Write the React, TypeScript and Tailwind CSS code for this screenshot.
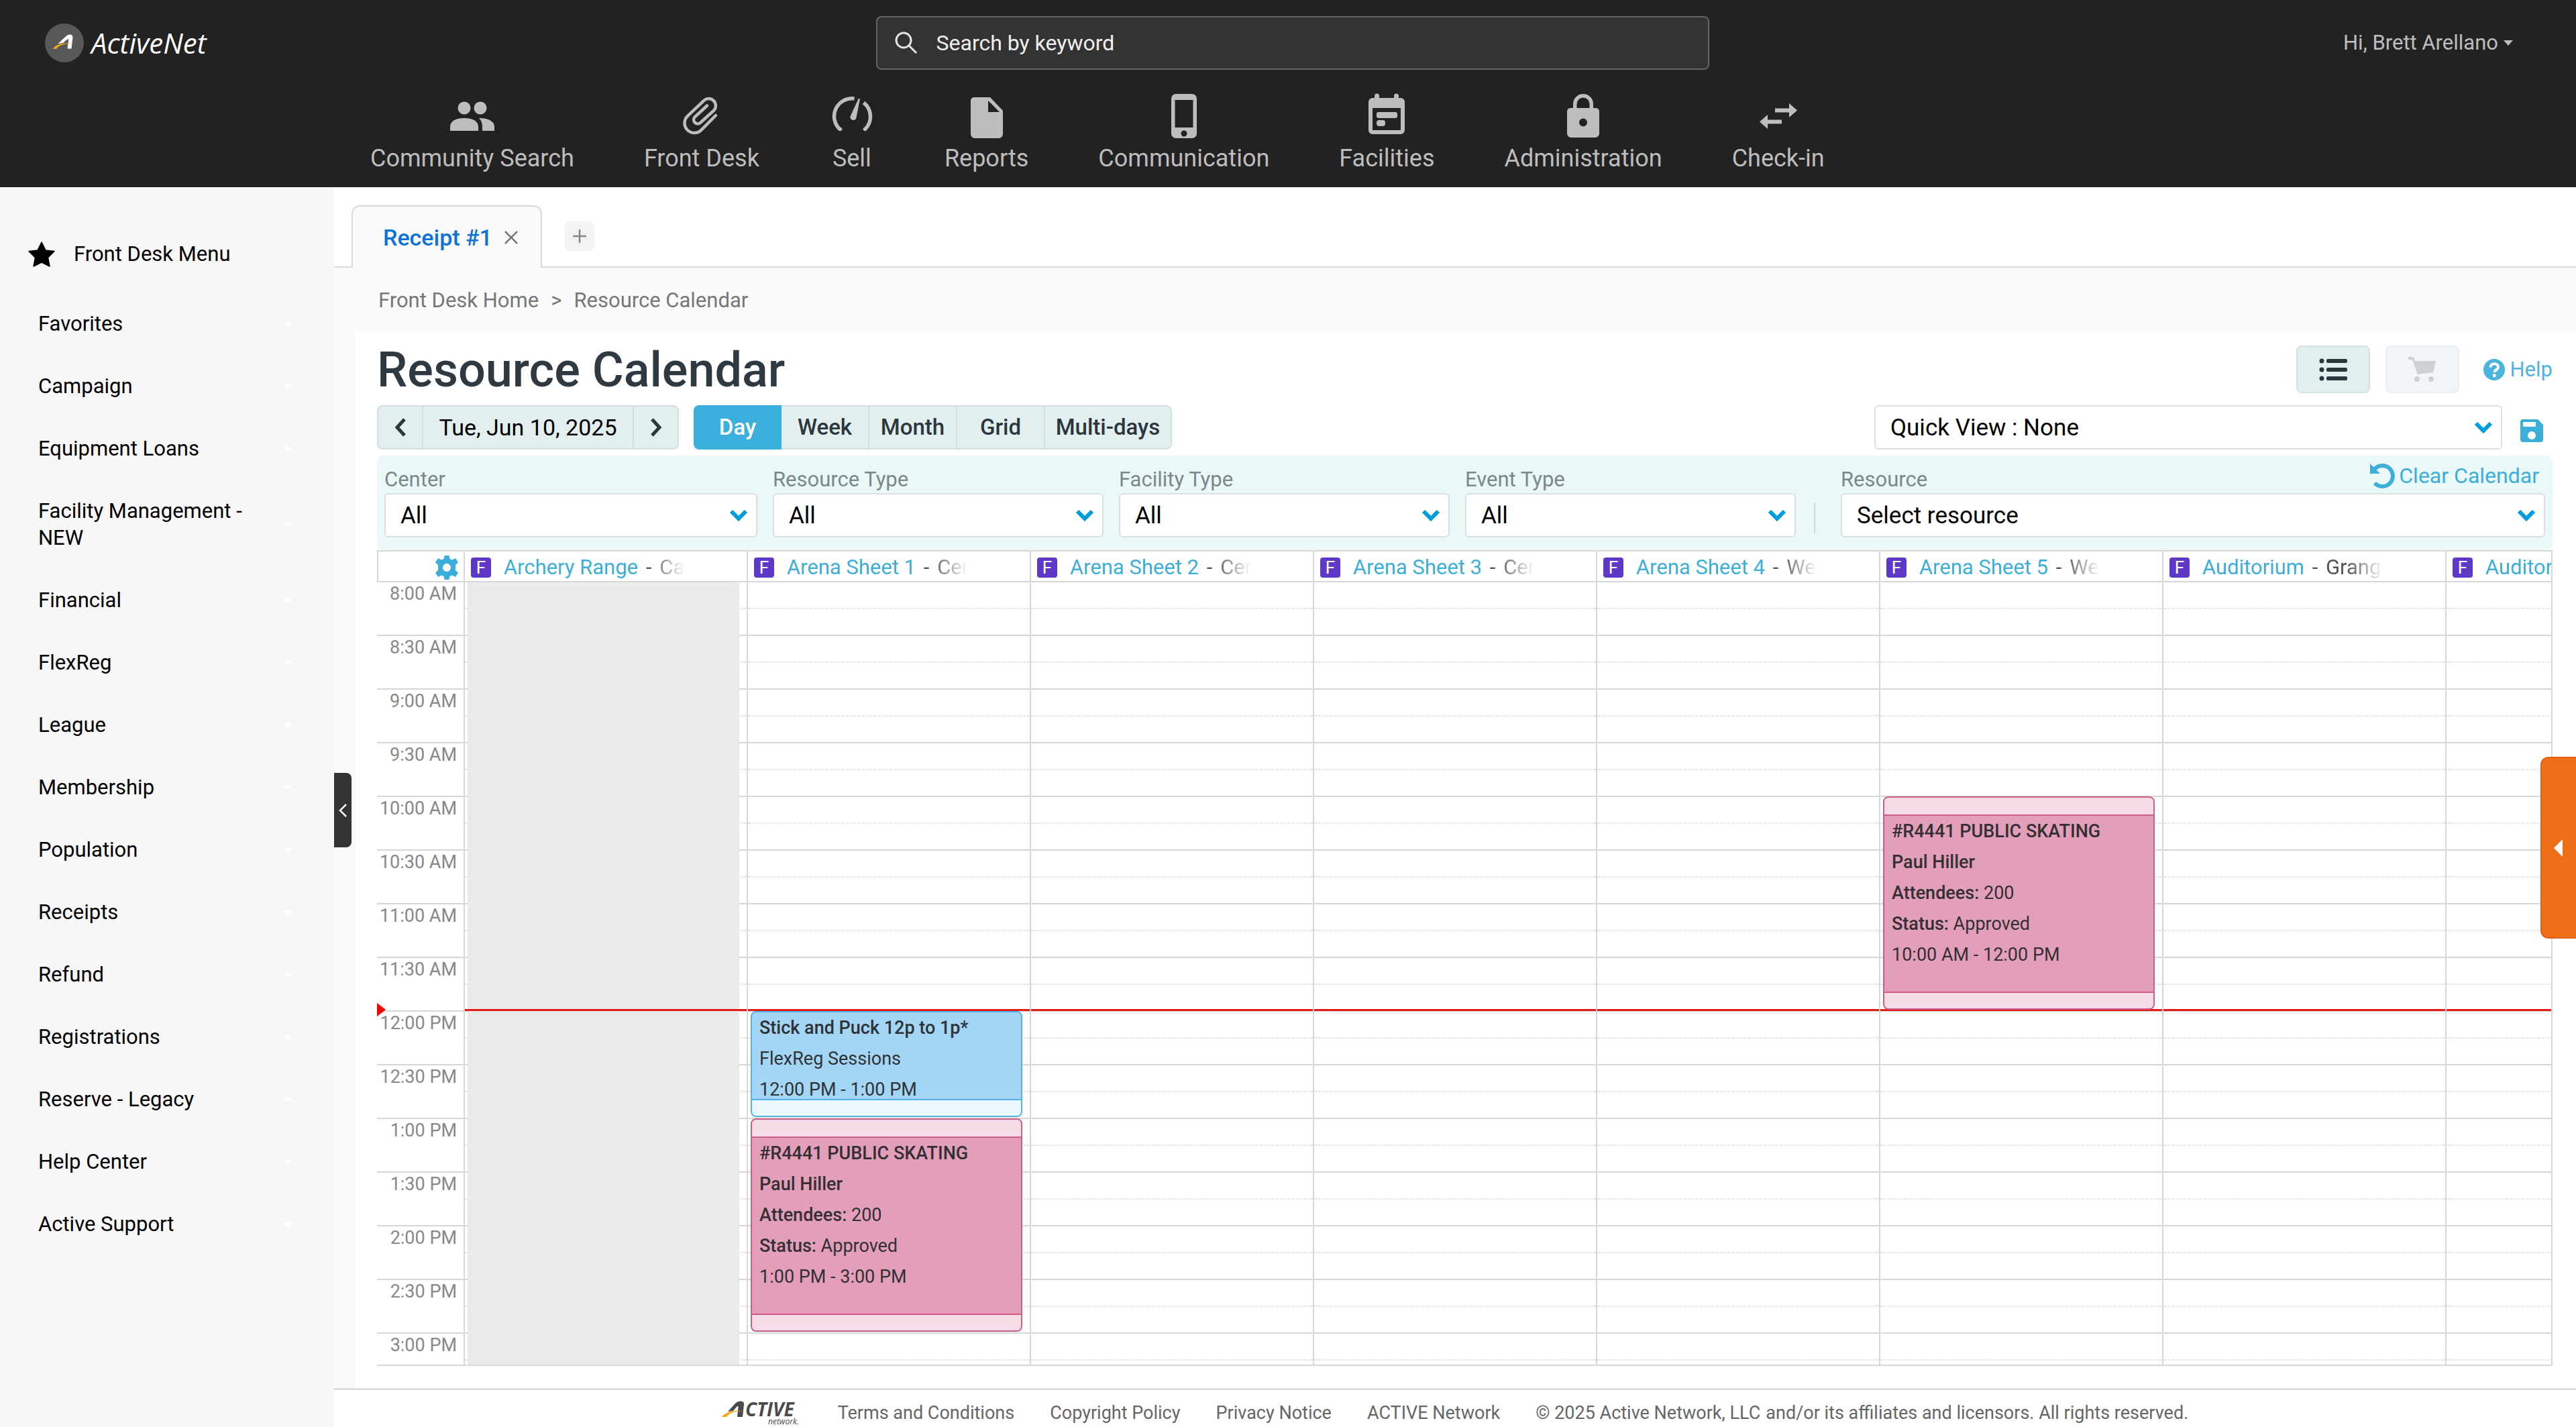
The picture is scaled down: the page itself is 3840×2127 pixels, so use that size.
import React from "react";

const NAV = [
  { label: "Community Search", icon: "people" },
  { label: "Front Desk", icon: "clip" },
  { label: "Sell", icon: "gauge" },
  { label: "Reports", icon: "file" },
  { label: "Communication", icon: "phone" },
  { label: "Facilities", icon: "calendar" },
  { label: "Administration", icon: "lock" },
  { label: "Check-in", icon: "arrows" },
];

const MENU = [
  "Favorites",
  "Campaign",
  "Equipment Loans",
  "Facility Management - NEW",
  "Financial",
  "FlexReg",
  "League",
  "Membership",
  "Population",
  "Receipts",
  "Refund",
  "Registrations",
  "Reserve - Legacy",
  "Help Center",
  "Active Support",
];

const TIMES = [
  "8:00 AM", "8:30 AM", "9:00 AM", "9:30 AM", "10:00 AM", "10:30 AM", "11:00 AM", "11:30 AM",
  "12:00 PM", "12:30 PM", "1:00 PM", "1:30 PM", "2:00 PM", "2:30 PM", "3:00 PM",
];

type Booking = { kind: "pink" | "blue"; start: number; slots: number; time: string };
type Resource = { name: string; center: string; blocked?: boolean; bookings?: Booking[] };

const RESOURCES: Resource[] = [
  { name: "Archery Range", center: "Carson", blocked: true },
  {
    name: "Arena Sheet 1",
    center: "Central",
    bookings: [
      { kind: "blue", start: 8, slots: 2, time: "12:00 PM - 1:00 PM" },
      { kind: "pink", start: 10, slots: 4, time: "1:00 PM - 3:00 PM" },
    ],
  },
  { name: "Arena Sheet 2", center: "Central" },
  { name: "Arena Sheet 3", center: "Central" },
  { name: "Arena Sheet 4", center: "West" },
  {
    name: "Arena Sheet 5",
    center: "West",
    bookings: [{ kind: "pink", start: 4, slots: 4, time: "10:00 AM - 12:00 PM" }],
  },
  { name: "Auditorium", center: "Grange" },
  { name: "Auditorium 2", center: "Grange" },
];

function NavIcon({ name }: { name: string }) {
  return (
    <svg viewBox="0 0 68 68" className="h-[68px] w-[68px]" fill="#bdbdbd" aria-hidden="true">
      {name === "people" && (
        <>
          <circle cx="22" cy="23" r="9.5" />
          <circle cx="46" cy="23" r="9.5" />
          <path d="M1 57V51C1 42 10 38 22 38s21 4 21 13v6z" />
          <path d="M44 38c13 0 23 4 23 13v6H49v-6c0-6-2-10-5-13z" />
        </>
      )}
      {name === "clip" && (
        <path
          d="M55 34 33.300 55.800A14.500 14.500 0 0 1 12.800 35.200L37.600 11.600A10.500 10.500 0 0 1 52.400 26.400L31.700 45.200A6 6 0 0 1 23.300 36.800L42 19.500"
          fill="none"
          stroke="#bdbdbd"
          strokeWidth="4.500"
          strokeLinecap="round"
        />
      )}
      {name === "gauge" && (
        <>
          <path d="M37.500 9A26.500 26.500 0 0 0 16.300 55" fill="none" stroke="#bdbdbd" strokeWidth="5.500" />
          <path d="M51.500 15A26.500 26.500 0 0 1 53.700 54.500" fill="none" stroke="#bdbdbd" strokeWidth="5.500" />
          <circle cx="16.500" cy="54.500" r="2.800" />
          <circle cx="53.500" cy="54.500" r="2.800" />
          <path d="M43.500 9.500a1.200 1.200 0 0 1 2.300.5L40.500 37.500a4.600 4.600 0 0 1-9-2z" />
        </>
      )}
      {name === "file" && (
        <path
          fillRule="evenodd"
          d="M15 7h24l19 20v35a6 6 0 0 1-6 6H16a6 6 0 0 1-6-6V12a5 5 0 0 1 5-5zm21 5v17h17z"
        />
      )}
      {name === "phone" && (
        <path
          fillRule="evenodd"
          d="M22 2h24a7 7 0 0 1 7 7v52a7 7 0 0 1-7 7H22a7 7 0 0 1-7-7V9a7 7 0 0 1 7-7zm-1.500 9v41h27V11zM34 56.500a4.500 4.500 0 1 0 0 9 4.500 4.500 0 0 0 0-9z"
        />
      )}
      {name === "calendar" && (
        <>
          <path
            fillRule="evenodd"
            d="M16 5a3.500 3.500 0 0 1 7 0v3h22V5a3.500 3.500 0 0 1 7 0v3h3a6 6 0 0 1 6 6v42a6 6 0 0 1-6 6H13a6 6 0 0 1-6-6V14a6 6 0 0 1 6-6h3zM13 23v33h42V23z"
          />
          <rect x="19" y="29" width="31" height="9" rx="3" />
          <rect x="19" y="41" width="13" height="9" rx="4" />
        </>
      )}
      {name === "lock" && (
        <path
          fillRule="evenodd"
          d="M19 23V17a15 15 0 0 1 30 0v6h4a5 5 0 0 1 5 5v33a6 6 0 0 1-6 6H16a6 6 0 0 1-6-6V28a5 5 0 0 1 5-5zm5.500 0h19V17a9.500 9.500 0 0 0-19 0zM34 38.500a6 6 0 1 0 0 12 6 6 0 0 0 0-12z"
        />
      )}
      {name === "arrows" && (
        <path d="M50 16l12 10.500L50 37v-7.500H29v-6h21zM18 33v7.500h21v6H18V54L6 43.500z" />
      )}
    </svg>
  );
}

function Chevron() {
  return (
    <svg viewBox="0 0 28 18" className="pointer-events-none absolute top-1/2 right-[14px] h-[18px] w-7 -translate-y-1/2" aria-hidden="true">
      <path d="M3 3l11 11L25 3" fill="none" stroke="#009fdb" strokeWidth="6" />
    </svg>
  );
}

function SelectBox({ id, value }: { id: string; value: string }) {
  return (
    <div className="relative">
      <select
        id={id}
        className="block h-[66px] w-full appearance-none rounded-[6px] border-2 border-[#dcdfe0] bg-white pt-[2px] pr-12 pl-[22px] text-[35px] text-black"
      >
        <option>{value}</option>
      </select>
      <Chevron />
    </div>
  );
}

function Filter({ id, label, value, className }: { id: string; label: string; value: string; className: string }) {
  return (
    <div className={className}>
      <label htmlFor={id} className="block pt-[2px] text-[31px] leading-[40px] text-[#7b8889]">
        {label}
      </label>
      <SelectBox id={id} value={value} />
    </div>
  );
}

function BookingCard({ booking }: { booking: Booking }) {
  const place = { top: booking.start * 80 - 1, height: booking.slots * 80 - 2 };
  if (booking.kind === "blue") {
    return (
      <div
        style={place}
        className="absolute right-[11px] left-1 flex flex-col overflow-hidden rounded-[8px] border-2 border-[#51b1ea] bg-[#a3d6f5] text-[27px] leading-[46px] text-[#2f3337]"
      >
        <div className="min-h-0 flex-1 pl-[11px]">
          <p className="font-medium">Stick and Puck 12p to 1p*</p>
          <p>FlexReg Sessions</p>
          <p>{booking.time}</p>
        </div>
        <div className="h-[25px] shrink-0 border-t-2 border-[#51b1ea] bg-[#eaf7fd]" />
      </div>
    );
  }
  return (
    <div
      style={place}
      className="absolute right-[11px] left-1 flex flex-col overflow-hidden rounded-[8px] border-2 border-[#cc5c88] bg-[#e39fba] text-[27px] leading-[46px] text-[#332f33]"
    >
      <div className="h-[27px] shrink-0 border-b-2 border-[#cc5c88] bg-[#f5dce7]" />
      <div className="min-h-0 flex-1 pl-[11px]">
        <p className="font-medium">#R4441 PUBLIC SKATING</p>
        <p className="font-medium">Paul Hiller</p>
        <p>
          <span className="font-medium">Attendees:</span> 200
        </p>
        <p>
          <span className="font-medium">Status:</span> Approved
        </p>
        <p>{booking.time}</p>
      </div>
      <div className="h-[25px] shrink-0 border-t-2 border-[#cc5c88] bg-[#f5dce7]" />
    </div>
  );
}

function ActiveMark() {
  return (
    <svg viewBox="0 0 58 58" className="h-[58px] w-[58px]" aria-hidden="true">
      <circle cx="29" cy="29" r="29" fill="#57585a" />
      <path d="M19.500 30L32 18.500c3-2.700 9.700-3.500 9.400 2.500L39.500 37.500h-6l1.600-13c.2-1.600-.8-1.600-1.800-.7L27 29z" fill="#fff" />
      <path d="M11.500 37.800c6-7.500 15-9.300 28.500-8-12.500.6-19 2.500-22.500 8z" fill="#f5a81c" />
    </svg>
  );
}

function FooterLogo() {
  return (
    <svg viewBox="0 0 120 36" className="h-9 w-[120px]" role="img" aria-label="ACTIVE network">
      <path d="M9 16L21 3c3.500-3.500 12.500-4 12 2L31 24h-8l1.500-15c.1-1.500-.9-1.500-2-.5L17 15z" fill="#4a4a4b" />
      <path d="M0 24c6-7.500 15-10 32-9-14 .8-21 3-25 9z" fill="#f5a81c" />
      <text x="35" y="23" fontFamily="Open Sans" fontStyle="italic" fontWeight="700" fontSize="28" fill="#4a4a4b">CTIVE</text>
      <text x="69" y="35" fontFamily="Open Sans" fontStyle="italic" fontSize="12" fill="#4a4a4b">network.</text>
    </svg>
  );
}

function Header() {
  return (
    <header className="h-[279px] shrink-0 bg-[#222222]">
      <div className="flex items-center justify-between pt-6 pr-[94px] pl-[67px]">
        <a href="#home" className="flex w-[520px] items-center gap-[11px]">
          <ActiveMark />
          <span className="font-[Open_Sans] text-[42px] leading-[58px] font-medium text-white italic">ActiveNet</span>
        </a>
        <label className="flex h-20 w-[1242px] items-center rounded-[8px] border-2 border-[#666666] bg-[#333333] pl-[26px]">
          <svg viewBox="0 0 34 34" className="h-[34px] w-[34px]" fill="none" stroke="#e4e4e4" strokeWidth="3" aria-hidden="true">
            <circle cx="13" cy="13" r="11" />
            <path d="M21 21l11 11" />
          </svg>
          <input
            type="search"
            aria-label="Search by keyword"
            placeholder="Search by keyword"
            className="ml-7 h-full flex-1 bg-transparent text-[32px] text-white outline-none placeholder:text-[#efefef] placeholder:opacity-100"
          />
        </label>
        <button type="button" className="flex w-[480px] items-center justify-end gap-2 text-[31px] text-[#bdbdbd]">
          Hi, Brett Arellano
          <svg viewBox="0 0 14 8" className="h-2 w-[14px]" aria-hidden="true">
            <path d="M0 0h14L7 8z" fill="#bdbdbd" />
          </svg>
        </button>
      </div>
      <nav className="flex gap-[104px] pt-[34px] pl-[552px]" aria-label="Main">
        {NAV.map((n) => (
          <a key={n.label} href="#nav" className="flex flex-col items-center text-[36px] leading-[44px] whitespace-nowrap text-[#bdbdbd]">
            <NavIcon name={n.icon} />
            <span className="mt-2 block">{n.label}</span>
          </a>
        ))}
      </nav>
    </header>
  );
}

function Sidebar() {
  return (
    <aside className="w-[498px] shrink-0 bg-[#f7f7f7] pt-[80px] text-[31px] leading-[40px] text-black">
      <div className="flex items-center gap-[28px] pl-[42px]">
        <svg viewBox="0 0 40 38" className="h-[38px] w-10" aria-hidden="true">
          <path d="M20 1l6 12 13 1.500-9.500 9.500L32 37l-12-6-12 6 2.500-13L1 14.500 14 13z" fill="#000" stroke="#000" strokeWidth="1.500" strokeLinejoin="round" />
        </svg>
        <h2>Front Desk Menu</h2>
      </div>
      <ul className="mt-[38px]">
        {MENU.map((m) => (
          <li key={m}>
            <button type="button" className="mb-px flex w-full items-center py-[26px] pr-[62px] pl-[57px] text-left">
              <span className="w-[330px]">{m}</span>
              <svg viewBox="0 0 14 7" className="ml-auto h-[7px] w-[14px]" aria-hidden="true">
                <path d="M0 0h14L7 7z" fill="#fff" />
              </svg>
            </button>
          </li>
        ))}
      </ul>
    </aside>
  );
}

function TabStrip() {
  return (
    <div className="flex h-[120px] shrink-0 bg-white">
      <div className="w-[26px] border-b-2 border-[#dadada]" />
      <div className="mt-[27px] flex items-center rounded-t-[12px] border-2 border-b-0 border-[#dadada] bg-[#fafafa] pr-[34px] pl-[45px]">
        <button type="button" className="text-[34px] leading-[44px] font-medium text-[#0b72d9]">
          Receipt #1
        </button>
        <button type="button" aria-label="Close tab" className="ml-[18px]">
          <svg viewBox="0 0 20 20" className="h-5 w-5" stroke="#777" strokeWidth="2.500" aria-hidden="true">
            <path d="M1 1l18 18M19 1L1 19" />
          </svg>
        </button>
      </div>
      <div className="flex-1 border-b-2 border-[#dadada] pt-[51px] pl-[34px]">
        <button type="button" aria-label="New tab" className="flex h-11 w-11 items-center justify-center rounded-[8px] bg-[#f2f3f3]">
          <svg viewBox="0 0 20 20" className="h-5 w-5" stroke="#888" strokeWidth="2.500" aria-hidden="true">
            <path d="M10 0v20M0 10h20" />
          </svg>
        </button>
      </div>
    </div>
  );
}

function Toolbar() {
  return (
    <>
      <div className="flex items-center justify-between">
        <h1 className="pt-[3px] text-[72px] leading-[68px] font-medium text-[#2f3941]">Resource Calendar</h1>
        <div className="flex items-center">
          <button type="button" aria-label="List view" className="flex h-[71px] w-[110px] items-center justify-center rounded-[8px] border-2 border-[#d5e2e3] bg-[#e2efee]">
            <svg viewBox="0 0 42 34" className="h-[34px] w-[42px]" fill="#2b363d" aria-hidden="true">
              <circle cx="4" cy="4" r="3.500" />
              <circle cx="4" cy="17" r="3.500" />
              <circle cx="4" cy="30" r="3.500" />
              <rect x="11" y="1" width="31" height="6" rx="2" />
              <rect x="11" y="14" width="31" height="6" rx="2" />
              <rect x="11" y="27" width="31" height="6" rx="2" />
            </svg>
          </button>
          <button type="button" disabled aria-label="Cart" className="ml-[23px] flex h-[71px] w-[110px] items-center justify-center rounded-[8px] border-2 border-[#e8eef1] bg-[#f0f5f7]">
            <svg viewBox="0 0 42 38" className="h-[38px] w-[42px]" fill="#cdd1d4" aria-hidden="true">
              <path d="M0 0h6c2 0 2.500 1 3 3l1 3h31l-4 17-23 3L6 4H0z" />
              <circle cx="13" cy="33" r="4" />
              <circle cx="34" cy="33" r="4" />
            </svg>
          </button>
          <a href="#help" className="ml-[36px] flex items-center gap-2 text-[31px] leading-[40px] text-[#4fb3dd]">
            <svg viewBox="0 0 32 32" className="h-8 w-8" aria-hidden="true">
              <circle cx="16" cy="16" r="16" fill="#4ab3de" />
              <path d="M10.500 12.500c0-7 11.500-7 11.500-.5 0 4.500-5.500 4-5.500 8" fill="none" stroke="#fff" strokeWidth="4" />
              <rect x="14" y="22.500" width="4.500" height="4.500" fill="#fff" />
            </svg>
            Help
          </a>
        </div>
      </div>
      <div className="mt-[18px] flex items-center">
        <div className="flex h-[66px] rounded-[8px] border-2 border-[#d3dfe2] bg-[#e2efee]">
          <button type="button" aria-label="Previous day" className="flex w-[67px] items-center justify-center border-r-2 border-[#d3dfe2]">
            <svg viewBox="0 0 18 28" className="h-7 w-[18px]" fill="none" stroke="#2b363d" strokeWidth="5" aria-hidden="true">
              <path d="M15 2L4 14l11 12" />
            </svg>
          </button>
          <button type="button" className="w-[312px] text-[34px] whitespace-nowrap text-black">
            Tue, Jun 10, 2025
          </button>
          <button type="button" aria-label="Next day" className="flex w-[67px] items-center justify-center border-l-2 border-[#d3dfe2]">
            <svg viewBox="0 0 18 28" className="h-7 w-[18px]" fill="none" stroke="#2b363d" strokeWidth="5" aria-hidden="true">
              <path d="M3 2l11 12L3 26" />
            </svg>
          </button>
        </div>
        <div className="ml-[22px] flex h-[66px] overflow-hidden rounded-[8px] text-[33px] font-medium text-[#2b363d]">
          <button type="button" className="w-[131px] bg-[#3bb0dd] text-white">Day</button>
          <button type="button" className="w-[131px] border-y-2 border-r-2 border-[#d3dfe2] bg-[#e2efee]">Week</button>
          <button type="button" className="w-[131px] border-y-2 border-r-2 border-[#d3dfe2] bg-[#e2efee]">Month</button>
          <button type="button" className="w-[131px] border-y-2 border-r-2 border-[#d3dfe2] bg-[#e2efee]">Grid</button>
          <button type="button" className="w-[189px] rounded-r-[8px] border-y-2 border-r-2 border-[#d3dfe2] bg-[#e2efee]">Multi-days</button>
        </div>
        <div className="ml-auto w-[936px]">
          <label htmlFor="quick" className="hidden">Quick View</label>
          <SelectBox id="quick" value="Quick View : None" />
        </div>
        <button type="button" aria-label="Save view" className="mt-[10px] mr-[14px] ml-[27px]">
          <svg viewBox="0 0 34 34" className="h-[34px] w-[34px]" aria-hidden="true">
            <path fillRule="evenodd" fill="#3bafda" d="M4 0h22l8 8v22a4 4 0 0 1-4 4H4a4 4 0 0 1-4-4V4a4 4 0 0 1 4-4zm0 4v7h19V4zm13 14a6 6 0 1 0 0 12 6 6 0 0 0 0-12z" />
          </svg>
        </button>
      </div>
    </>
  );
}

function Filters() {
  return (
    <div className="relative mt-[9px] flex gap-[23px] rounded-[10px] bg-[#ebf8f8] px-[11px] pt-[14px] pb-[19px]">
      <Filter id="center" label="Center" value="All" className="min-w-0 flex-[556]" />
      <Filter id="rtype" label="Resource Type" value="All" className="min-w-0 flex-[493]" />
      <Filter id="ftype" label="Facility Type" value="All" className="min-w-0 flex-[493]" />
      <Filter id="etype" label="Event Type" value="All" className="min-w-0 flex-[493]" />
      <div className="mr-[15px] mb-[6px] ml-1 h-[45px] w-[2px] self-end bg-[#cfdada]" />
      <Filter id="resource" label="Resource" value="Select resource" className="min-w-0 flex-[1050]" />
      <button type="button" className="absolute top-[10px] right-5 flex items-center gap-[6px] text-[32px] leading-[40px] text-[#3bafda]">
        <svg viewBox="0 0 38 38" className="h-[38px] w-[38px]" aria-hidden="true">
          <path d="M8 9a15.500 15.500 0 1 1 0 21" fill="none" stroke="#3bafda" strokeWidth="6" />
          <path d="M1 1v15h15z" fill="#3bafda" />
        </svg>
        Clear Calendar
      </button>
    </div>
  );
}

function Calendar() {
  return (
    <div className="relative flex min-h-0 flex-1 flex-col border-b-2 border-[#d8d8d8]">
      <div className="flex h-12 shrink-0 overflow-hidden border-2 border-[#d8d8d8] text-[31px] leading-[41px]">
        <div className="flex w-[127px] shrink-0 items-center justify-end pt-[3px] pr-[7px]">
          <button type="button" aria-label="Calendar settings">
            <svg viewBox="0 0 36 36" className="h-9 w-9" aria-hidden="true">
              <path
                fillRule="evenodd"
                fill="#3bafda"
                d="M14.500 0h7l1 5 3.500 1.500L31 4l4 6.500-4 3.500v8l4 3.500-4 6.500-5-2.500-3.500 1.500-1 5h-7l-1-5L10 29.500 5 32l-4-6.500L5 22v-8l-4-3.500L5 4l5 2.500L13.500 5zM18 12a6 6 0 1 0 0 12 6 6 0 0 0 0-12z"
              />
            </svg>
          </button>
        </div>
        {RESOURCES.map((r) => (
          <div key={r.name} className="flex w-[422px] shrink-0 items-center border-l-2 border-[#d8d8d8] pt-[3px] pl-[9px]">
            <span className="flex h-[30px] w-[30px] shrink-0 items-center justify-center rounded-[4px] bg-[#6038c8] text-[26px] leading-[30px] text-white">F</span>
            <div className="ml-[19px] w-[270px] overflow-hidden mask-r-from-80% whitespace-nowrap text-[#555555]">
              <a href="#resource" className="text-[#3bafda]">{r.name}</a>
              <span className="mx-[4px]"> - </span>
              {r.center}
            </div>
          </div>
        ))}
      </div>
      <div className="flex min-h-0 flex-1 overflow-hidden border-r-2 border-[#d8d8d8]">
        <div className="w-[129px] shrink-0">
          {TIMES.map((t) => (
            <div key={t} className="h-20 border-b-2 border-[#d8d8d8] pt-px pr-[10px] text-right text-[27px] leading-[32px] text-[#888888]">
              {t}
            </div>
          ))}
        </div>
        {RESOURCES.map((r) => (
          <div key={r.name} className="relative h-[1200px] w-[422px] shrink-0 border-l-2 border-[#d8d8d8]">
            {TIMES.map((t) => (
              <div key={t} className="h-20 border-b-2 border-[#d8d8d8]">
                <div className="h-10 border-b-2 border-dotted border-[#dddddd]" />
              </div>
            ))}
            {r.blocked && <div className="absolute inset-y-0 right-[11px] left-1 bg-[#eaeaea]" />}
            <div className="absolute inset-x-0 top-[636px] h-[3px] bg-[#e51a15]" />
            {r.bookings?.map((b) => <BookingCard key={b.start} booking={b} />)}
          </div>
        ))}
      </div>
      <svg viewBox="0 0 13 20" className="absolute top-[675px] left-0 h-5 w-[13px]" aria-hidden="true">
        <path d="M0 0l13 10L0 20z" fill="#ff0000" />
      </svg>
    </div>
  );
}

function Footer() {
  return (
    <footer className="flex h-[58px] shrink-0 items-center justify-center gap-[53px] border-t-[3px] border-[#dddddd] bg-white pt-3 text-[27px] leading-[36px] whitespace-nowrap text-[#666666]">
      <FooterLogo />
      <a href="#terms">Terms and Conditions</a>
      <a href="#copyright">Copyright Policy</a>
      <a href="#privacy">Privacy Notice</a>
      <a href="#active">ACTIVE Network</a>
      <p className="flex gap-2">
        <span>© 2025 Active Network, LLC</span>
        <span>and/or its affiliates and licensors. All rights reserved.</span>
      </p>
    </footer>
  );
}

export default function App() {
  return (
    <div className="relative flex h-screen flex-col bg-white font-[Roboto,sans-serif]">
      <Header />
      <div className="flex min-h-0 flex-1">
        <Sidebar />
        <main className="relative flex min-w-0 flex-1 flex-col bg-[#fafafa]">
          <TabStrip />
          <nav aria-label="Breadcrumb" className="flex h-[94px] shrink-0 items-center pt-[3px] pl-[66px] text-[31px] leading-[40px] text-[#777777]">
            <a href="#front">Front Desk Home</a>
            <span className="mx-[18px]">&gt;</span>
            <span>Resource Calendar</span>
          </nav>
          <section className="ml-[31px] flex min-h-0 flex-1 flex-col bg-white pt-[22px] pr-[35px] pb-[33px] pl-[33px]">
            <Toolbar />
            <Filters />
            <Calendar />
          </section>
          <Footer />
          <button type="button" aria-label="Collapse menu" className="absolute top-[873px] left-0 flex h-[111px] w-[26px] items-center justify-center rounded-r-[8px] bg-[#333333]">
            <svg viewBox="0 0 12 20" className="h-5 w-3" fill="none" stroke="#fff" strokeWidth="2.500" aria-hidden="true">
              <path d="M11 1L2 10l9 9" />
            </svg>
          </button>
        </main>
      </div>
      <button type="button" aria-label="Open panel" className="absolute top-[1128px] right-0 flex h-[271px] w-[53px] items-center rounded-l-[12px] border-2 border-r-0 border-[#e0620f] bg-[#f06e17] pl-[18px]">
        <svg viewBox="0 0 13 26" className="h-[26px] w-[13px]" aria-hidden="true">
          <path d="M13 0v26L0 13z" fill="#fff" />
        </svg>
      </button>
    </div>
  );
}
